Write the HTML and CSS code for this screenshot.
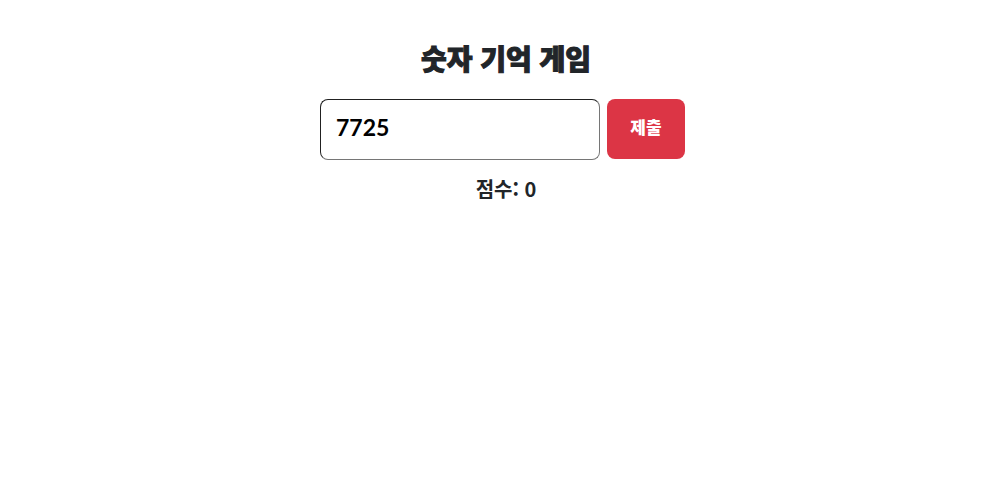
FILE: index.html
```html
<!DOCTYPE html>
<html lang="ko">
<head>
<meta charset="utf-8">
<meta name="viewport" content="width=device-width, initial-scale=1">
<title>숫자 기억 게임</title>
<link rel="stylesheet" href="styles.css">
</head>
<body>
<main class="game">
  <h1 class="title">숫자 기억 게임</h1>
  <form class="answer-form">
    <input class="answer" type="text" value="7725" aria-label="숫자">
    <button class="submit" type="button">제출</button>
  </form>
  <p class="score">점수: 0</p>
</main>
</body>
</html>
```

FILE: styles.css
```css
* {
  box-sizing: border-box;
}

body {
  margin: 0;
  padding: 40px 0 0 12px;
  background: #fff;
  color: #212529;
  font-family: "Noto Sans CJK KR", sans-serif;
}

.game {
  display: flex;
  flex-direction: column;
  align-items: center;
}

.title {
  margin: 0;
  font-size: 28px;
  line-height: 36px;
  font-weight: 900;
  -webkit-text-stroke: 1px #212529;
  stroke-linejoin: round;
}

.answer-form {
  display: flex;
  align-items: flex-start;
  gap: 7px;
  margin: 23px 7px 0 0;
}

.answer {
  width: 280px;
  height: 61px;
  padding: 0 15px 6px;
  border: 1px solid #212529;
  border-color: #212121 #767676 #767676 #212121;
  border-radius: 8px;
  background: #fff;
  color: #000;
  font-family: Lato, "Noto Sans CJK KR", sans-serif;
  font-size: 23px;
  font-weight: 700;
}

.submit {
  width: 78px;
  height: 60px;
  padding: 0 0 6px;
  border: 0;
  border-radius: 8px;
  background: #dc3545;
  color: #fff;
  font: 900 17px "Noto Sans CJK KR", sans-serif;
}

.score {
  margin: 14px 0 0;
  font-size: 20px;
  line-height: 30px;
  font-weight: 700;
}
```
